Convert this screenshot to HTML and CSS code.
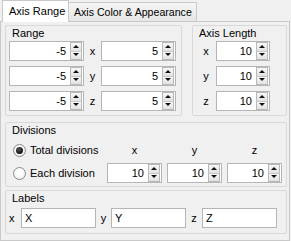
FILE: index.html
```html
<!DOCTYPE html>
<html>
<head>
<meta charset="utf-8">
<link rel="stylesheet" href="styles.css">
</head>
<body>
<div class="tabs">
  <div class="tab active">Axis Range</div>
  <div class="tab second">Axis Color &amp; Appearance</div>
</div>
<div class="pane">
  <div class="toprow">
    <div class="group range">
      <div class="gtitle">Range</div>
      <div class="rgrid">
        <div class="spin w75"><span class="val">-5</span><span class="btns"><span class="b up"></span><span class="b down"></span></span></div>
        <span class="lab">x</span>
        <div class="spin w75"><span class="val">5</span><span class="btns"><span class="b up"></span><span class="b down"></span></span></div>
        <div class="spin w75"><span class="val">-5</span><span class="btns"><span class="b up"></span><span class="b down"></span></span></div>
        <span class="lab">y</span>
        <div class="spin w75"><span class="val">5</span><span class="btns"><span class="b up"></span><span class="b down"></span></span></div>
        <div class="spin w75"><span class="val">-5</span><span class="btns"><span class="b up"></span><span class="b down"></span></span></div>
        <span class="lab">z</span>
        <div class="spin w75"><span class="val">5</span><span class="btns"><span class="b up"></span><span class="b down"></span></span></div>
      </div>
    </div>
    <div class="group length">
      <div class="gtitle">Axis Length</div>
      <div class="lgrid">
        <span class="lab">x</span>
        <div class="spin"><span class="val">10</span><span class="btns"><span class="b up"></span><span class="b down"></span></span></div>
        <span class="lab">y</span>
        <div class="spin"><span class="val">10</span><span class="btns"><span class="b up"></span><span class="b down"></span></span></div>
        <span class="lab">z</span>
        <div class="spin"><span class="val">10</span><span class="btns"><span class="b up"></span><span class="b down"></span></span></div>
      </div>
    </div>
  </div>
  <div class="group divisions">
    <div class="gtitle">Divisions</div>
    <div class="dgrid">
      <label class="radio"><span class="rb checked"></span>Total divisions</label>
      <span class="hdr">x</span>
      <span class="hdr">y</span>
      <span class="hdr">z</span>
      <label class="radio"><span class="rb"></span>Each division</label>
      <div class="spin"><span class="val">10</span><span class="btns"><span class="b up"></span><span class="b down"></span></span></div>
      <div class="spin"><span class="val">10</span><span class="btns"><span class="b up"></span><span class="b down"></span></span></div>
      <div class="spin"><span class="val">10</span><span class="btns"><span class="b up"></span><span class="b down"></span></span></div>
    </div>
  </div>
  <div class="group labels">
    <div class="gtitle">Labels</div>
    <div class="labgrid">
      <span class="llab first">x</span>
      <div class="line">X</div>
      <span class="llab">y</span>
      <div class="line">Y</div>
      <span class="llab">z</span>
      <div class="line">Z</div>
    </div>
  </div>
</div>
</body>
</html>
```
FILE: styles.css
```css
html, body {
  margin: 0;
  padding: 0;
}
body {
  width: 291px;
  height: 241px;
  overflow: hidden;
  background: #f0f0f0;
  font-family: "Liberation Sans", Arial, sans-serif;
  font-size: 11px;
  color: #000;
}
.tabs {
  display: flex;
  align-items: flex-end;
  height: 21px;
  padding-left: 2px;
  position: relative;
  z-index: 2;
}
.tab {
  box-sizing: border-box;
  height: 19px;
  line-height: 18px;
  border: 1px solid #c9c9c9;
  border-bottom: none;
  background: linear-gradient(#f5f5f5, #e6e6e6);
  margin-left: -1px;
  white-space: nowrap;
}
.tab.active {
  height: 22px;
  line-height: 21px;
  background: #ffffff;
  margin-left: 0;
  margin-bottom: -1px;
  width: 67px;
  padding: 0 0 0 6px;
  position: relative;
  z-index: 3;
}
.tab.second {
  padding: 0 4px 0 5px;
  font-size: 10.6px;
}
.pane {
  box-sizing: border-box;
  width: 290px;
  height: 220px;
  border: 1px solid #c9c9c9;
  background: #f0f0f0;
  padding: 3px 2px 0 4px;
  position: relative;
  z-index: 1;
}
.toprow {
  display: flex;
  gap: 10px;
}
.group {
  box-sizing: border-box;
  border: 1px solid #d9d9d9;
  border-radius: 2px;
  padding: 0 3px;
}
.gtitle {
  line-height: 14px;
  height: 14px;
  padding-left: 3px;
  margin-bottom: 1px;
}
.range {
  width: 177px;
  height: 91px;
}
.length {
  width: 95px;
  height: 91px;
}
.rgrid {
  display: grid;
  grid-template-columns: 75px 17px 75px;
  row-gap: 5px;
}
.lgrid {
  display: grid;
  grid-template-columns: 20px 54px;
  row-gap: 5px;
}
.lab {
  text-align: center;
  line-height: 20px;
}
.spin {
  box-sizing: border-box;
  height: 20px;
  border: 1px solid #b5b5b5;
  background: #fff;
  display: flex;
  align-items: stretch;
  padding: 0 1px 0 0;
}
.spin .val {
  flex: 1;
  text-align: right;
  line-height: 18px;
  padding-right: 4px;
}
.btns {
  width: 12px;
  display: flex;
  flex-direction: column;
}
.b {
  flex: 1;
  box-sizing: border-box;
  border: 1px solid #b9b9b9;
  background: linear-gradient(#f7f7f7, #e2e2e2);
  position: relative;
}
.b.up {
  border-bottom-color: #c8c8c8;
}
.b.down {
  border-top: none;
}
.b::after {
  content: "";
  position: absolute;
  left: 50%;
  top: 50%;
  margin-left: -3px;
  width: 0;
  height: 0;
  border-left: 3px solid transparent;
  border-right: 3px solid transparent;
}
.b.up::after {
  margin-top: -2px;
  border-bottom: 3px solid #111;
}
.b.down::after {
  margin-top: -2px;
  border-top: 3px solid #111;
}
.divisions {
  margin-top: 6px;
  height: 65px;
  padding: 0 4px 0 3px;
}
.dgrid {
  display: grid;
  grid-template-columns: 1fr 55px 55px 55px;
  column-gap: 5px;
  grid-template-rows: 20px 20px;
  row-gap: 3px;
  margin-top: 3px;
}
.hdr {
  text-align: center;
  line-height: 20px;
}
.radio {
  display: flex;
  align-items: center;
  padding-left: 4px;
  line-height: 20px;
}
.rb {
  box-sizing: border-box;
  width: 13px;
  height: 13px;
  border-radius: 50%;
  border: 1px solid #8a8a8a;
  background: radial-gradient(circle at 50% 40%, #ffffff 30%, #e4e4e4 100%);
  margin-right: 4px;
  position: relative;
}
.rb.checked::after {
  content: "";
  position: absolute;
  left: 2px;
  top: 2px;
  width: 7px;
  height: 7px;
  border-radius: 50%;
  background: radial-gradient(circle at 40% 35%, #555 0%, #111 70%);
}
.labels {
  margin-top: 3px;
  height: 44px;
  padding: 0 3px;
}
.labels .gtitle {
  margin-bottom: 3px;
}
.labgrid {
  display: grid;
  grid-template-columns: 13px 75px 15px 75px 16px 75px;
  margin-left: -1px;
}
.llab {
  text-align: center;
  line-height: 20px;
}
.llab.first {
  text-align: left;
  padding-left: 1px;
}
.line {
  box-sizing: border-box;
  height: 20px;
  border: 1px solid #b5b5b5;
  background: #fff;
  line-height: 18px;
  padding-left: 3px;
}
```
